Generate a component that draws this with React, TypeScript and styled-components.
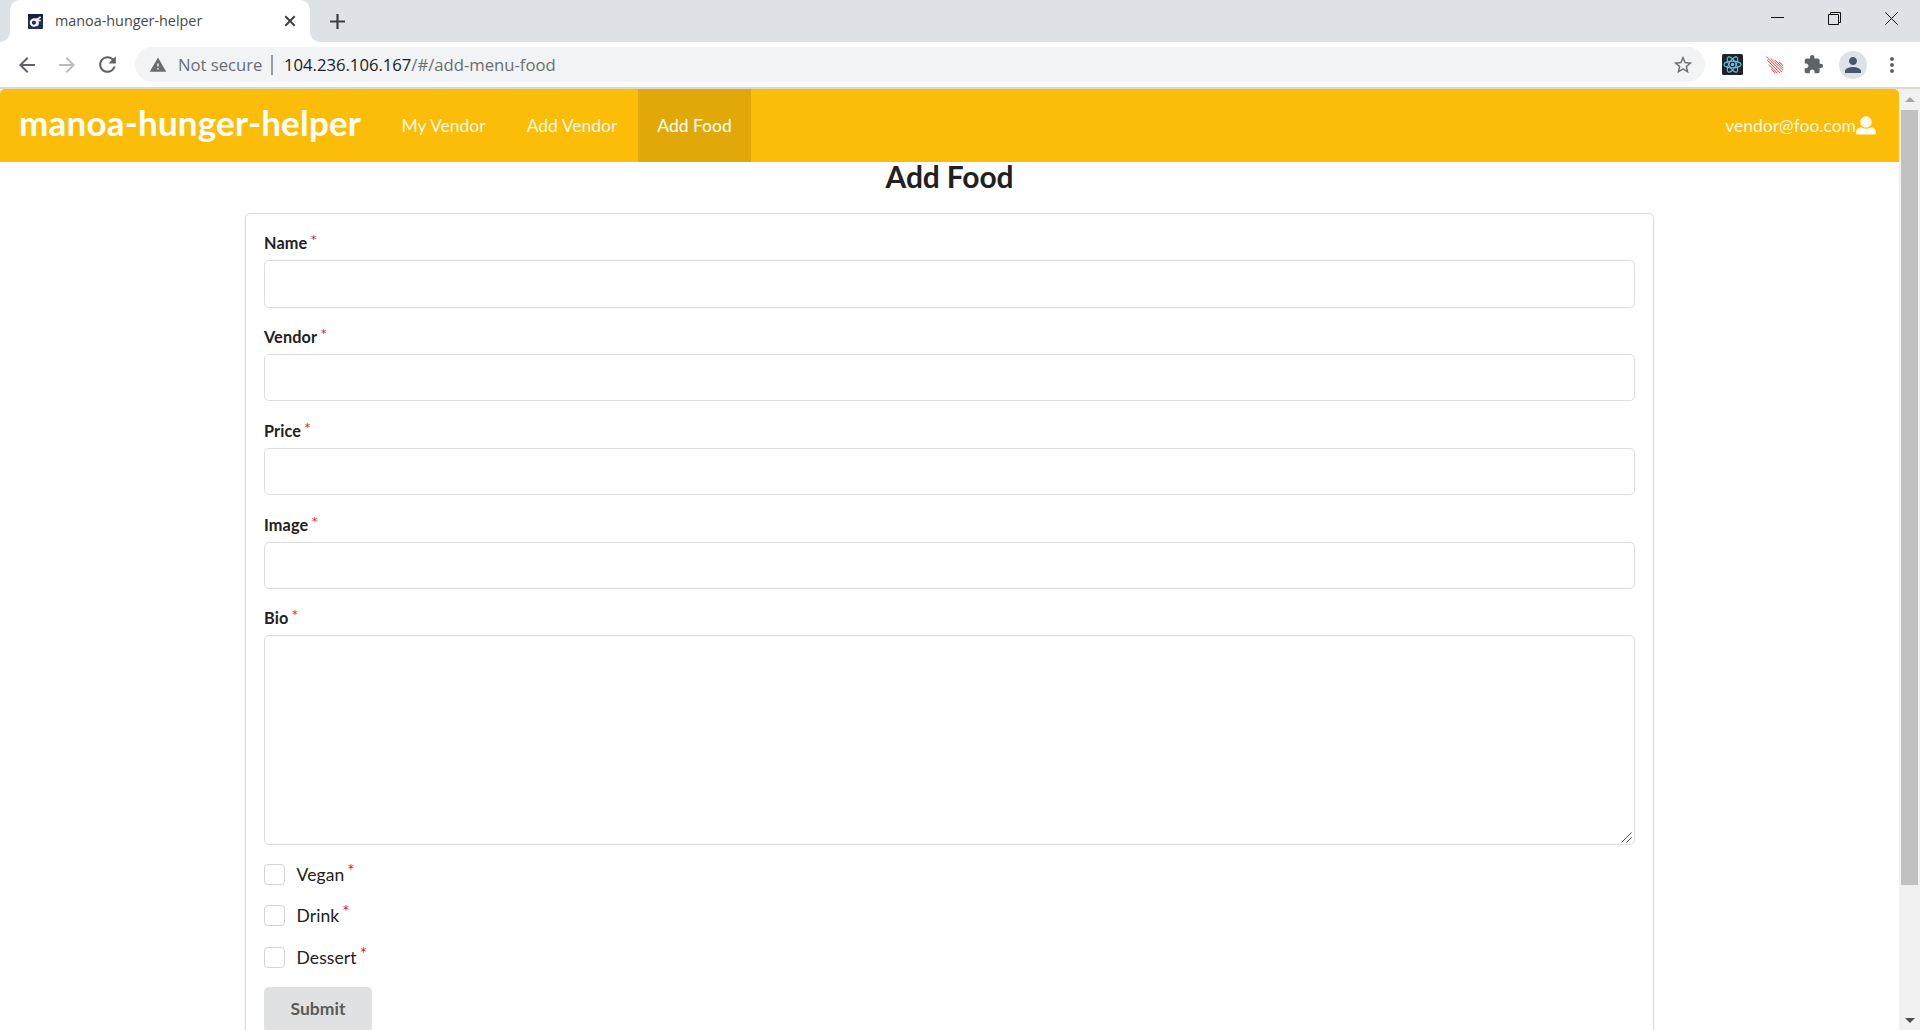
import React from 'react';
import styled, { createGlobalStyle } from 'styled-components';
import { MdStarBorder, MdExtension, MdPerson, MdRefresh, MdArrowBack, MdArrowForward, MdWarning, MdMoreVert } from 'react-icons/md';

const Global = createGlobalStyle`
  *, *::before, *::after { box-sizing: border-box; }
  body { margin: 0; background: #fff; overflow: hidden; }
`;

const Window = styled.div`
  display: flex;
  flex-direction: column;
  width: 1920px;
  height: 1030px;
  overflow: hidden;
  font-family: Lato, "Liberation Sans", sans-serif;
`;

const TabStrip = styled.div`
  display: flex;
  flex: 0 0 42px;
  height: 42px;
  background: #dee1e6;
`;

const TabCurve = styled.div<{ $side: 'left' | 'right' }>`
  width: 10px;
  height: 10px;
  align-self: flex-end;
  background: radial-gradient(circle at ${p => (p.$side === 'left' ? '0 0' : '100% 0')}, #dee1e6 9.5px, #fff 10px);
`;

const Tab = styled.div`
  display: flex;
  align-items: center;
  width: 300px;
  padding: 0 10px 0 18px;
  background: #fff;
  border-radius: 10px 10px 0 0;
`;

const TabTitle = styled.span`
  flex: 1;
  margin-left: 12px;
  font: 400 14.4px/20px "Open Sans", sans-serif;
  letter-spacing: -0.02px;
  color: #45494d;
`;

const NewTab = styled.div`
  display: flex;
  align-items: center;
  margin-left: 10px;
`;

const WindowButtons = styled.div`
  display: flex;
  align-items: center;
  gap: 44px;
  height: 37px;
  margin-left: auto;
  padding-right: 22px;
`;

const Toolbar = styled.div`
  display: flex;
  align-items: center;
  flex: 0 0 45px;
  height: 45px;
  padding: 0 16px 0 15px;
  background: #fff;
  color: #5f6368;
  svg { flex: none; }
`;

const NavIcon = styled.span<{ $dim?: boolean; $gap: number }>`
  display: flex;
  margin-right: ${p => p.$gap}px;
  color: ${p => (p.$dim ? '#babcbe' : '#5f6368')};
`;

const Omnibox = styled.div`
  display: flex;
  align-items: center;
  flex: 1;
  height: 35px;
  padding: 0 11px 0 14px;
  border-radius: 18px;
  background: #f1f3f4;
  font: 400 16.7px/24px "Open Sans", sans-serif;
  letter-spacing: -0.02px;
  color: #6a6e73;
`;

const Security = styled.span`
  width: 84px;
  margin-left: 11px;
  white-space: nowrap;
`;

const Divider = styled.span`
  width: 2px;
  height: 20px;
  margin: 0 11px 0 9px;
  background: #96999d;
`;

const Url = styled.span`
  flex: 1;
  white-space: nowrap;
  b { font-weight: 400; color: #202124; }
`;

const Extensions = styled.div`
  display: flex;
  align-items: center;
  margin-left: 17px;
`;

const ExtensionSlot = styled.span<{ $gap: number }>`
  display: flex;
  margin-right: ${p => p.$gap}px;
`;

const Avatar = styled.span`
  display: flex;
  align-items: center;
  justify-content: center;
  width: 28px;
  height: 28px;
  margin-right: 13.5px;
  border-radius: 50%;
  background: #dee1e6;
  color: #4a5670;
`;

const Edge = styled.div`
  flex: 0 0 2px;
  background: #dcd9c8;
`;

const Viewport = styled.div`
  display: flex;
  flex: 1;
  min-height: 0;
`;

const Page = styled.main`
  display: flex;
  flex-direction: column;
  align-items: center;
  width: 1899px;
  height: 941px;
  overflow: hidden;
`;

const Nav = styled.nav`
  display: flex;
  align-self: stretch;
  flex: 0 0 73px;
  height: 73px;
  background: #fbbd08;
  border-radius: 5px 5px 0 0;
  color: rgba(255, 255, 255, 0.92);
`;

const Brand = styled.h1`
  display: flex;
  align-items: center;
  width: 381px;
  margin: 0;
  padding: 0 0 8px 19px;
  font-size: 35px;
  letter-spacing: 0.2px;
  font-weight: 700;
  line-height: 40px;
  color: #fff;
`;

const NavItem = styled.a<{ $active?: boolean; $width: number }>`
  display: flex;
  align-items: center;
  justify-content: center;
  width: ${p => p.$width}px;
  font-size: 17.5px;
  background: ${p => (p.$active ? '#e0a909' : 'transparent')};
  color: ${p => (p.$active ? '#fff' : 'inherit')};
`;

const User = styled.a`
  display: flex;
  align-items: center;
  margin-left: auto;
  padding-right: 23px;
  font-size: 17.5px;
`;

const Heading = styled.h2`
  flex: none;
  height: 29px;
  margin: 0 0 22px;
  font-size: 30px;
  line-height: 28px;
  letter-spacing: -0.15px;
  font-weight: 700;
  color: #212121;
`;

const Card = styled.form`
  flex: none;
  display: flex;
  flex-direction: column;
  width: 1409px;
  height: 900px;
  padding: 18.4px 18px 0;
  border: 1px solid #d9dadb;
  border-radius: 5px;
  box-shadow: 0 1px 2px rgba(34, 36, 38, 0.12);
`;

const Field = styled.div<{ $last?: boolean }>`
  display: flex;
  flex-direction: column;
  flex: none;
  height: ${p => (p.$last ? 240 : 93.75)}px;
`;

const Label = styled.label`
  display: flex;
  height: 28px;
  flex: none;
  font-size: 16.25px;
  letter-spacing: 0.12px;
  line-height: 22px;
  font-weight: 700;
  color: #212121;
`;

const Star = styled.span`
  margin: -3px 0 0 3px;
  font-weight: 400;
  color: #db2828;
`;

const Input = styled.input`
  width: 1371px;
  height: 47.3px;
  border: 1px solid #dededf;
  border-radius: 5px;
  background: #fff;
  outline: none;
`;

const TextArea = styled.textarea`
  display: block;
  width: 1371px;
  height: 210px;
  border: 1px solid #dededf;
  border-radius: 5px;
  background: #fff;
  outline: none;
  resize: none;
`;

const AreaWrap = styled.div`
  position: relative;
  height: 210px;
`;

const Grip = styled.svg`
  position: absolute;
  right: 3px;
  bottom: 2px;
`;

const Checks = styled.div`
  display: flex;
  flex-direction: column;
  gap: 20.4px;
  margin-top: 16.6px;
`;

const CheckRow = styled.label`
  display: flex;
  height: 21px;
  font-size: 17.5px;
  letter-spacing: 0.1px;
  line-height: 22px;
  color: #212121;
`;

const Box = styled.span`
  width: 21px;
  height: 21px;
  margin-right: 11.5px;
  border: 1px solid #d4d4d5;
  border-radius: 4px;
`;

const CheckStar = styled(Star)`
  margin-top: -4px;
`;

const Submit = styled.button`
  width: 108px;
  height: 45px;
  margin-top: 19px;
  padding: 0;
  border: 0;
  border-radius: 5px;
  background: #e0e1e2;
  color: #5a5a5a;
  font: 700 17.5px/20px Lato, sans-serif;
`;

const Scrollbar = styled.div`
  display: flex;
  flex-direction: column;
  align-items: center;
  width: 21px;
  background: #f1f1f1;
`;

const Thumb = styled.div`
  width: 17px;
  height: 775px;
  margin-bottom: auto;
  background: #c1c1c1;
`;

const ArrowBox = styled.div<{ $height: number }>`
  display: flex;
  align-items: center;
  height: ${p => p.$height}px;
`;

const Favicon = () => (
  <svg width="15" height="15" viewBox="0 0 16 16">
    <rect width="16" height="16" rx="1" fill="#1f2f5c" />
    <path d="M0 0h16v5H0z" fill="#18203c" />
    <circle cx="6.3" cy="9.2" r="3.3" fill="none" stroke="#fff" strokeWidth="2.2" />
    <path d="M5.500 5.500Q10 6.500 13.500 3M9.500 6.500L13.500 7M10 7.500Q12 11 9 12.500" fill="none" stroke="#eef" strokeWidth="1.8" />
  </svg>
);

const ReactLogo = () => (
  <svg width="21" height="21" viewBox="0 0 21 21">
    <rect width="21" height="21" rx="1.5" fill="#20232a" />
    <g fill="none" stroke="#61bfe0" strokeWidth="1.15">
      {[0, 60, 120].map(a => (
        <ellipse key={a} cx="10.5" cy="10.5" rx="8.6" ry="3.4" transform={`rotate(${a} 10.5 10.5)`} />
      ))}
    </g>
    <circle cx="10.5" cy="10.5" r="1.8" fill="#61bfe0" />
  </svg>
);

const Meteor = () => (
  <svg width="18" height="18" viewBox="0 0 18 18" fill="none" stroke="#de4040" strokeWidth="1" strokeLinecap="round">
    <path d="M.7 1L15.800 16M5 2.700L16.800 14M9 4.200L17 11.800M13 5.800L17 9.500M1.600 4.500L13.500 16.700M3.200 8.800L11.200 17M5.500 13.500L8.500 16.500" />
  </svg>
);

const fields = ['Name', 'Vendor', 'Price', 'Image'];
const options = ['Vegan', 'Drink', 'Dessert'];

export default function App() {
  return (
    <Window>
      <Global />
      <TabStrip>
        <TabCurve $side="left" />
        <Tab>
          <Favicon />
          <TabTitle>manoa-hunger-helper</TabTitle>
          <svg width="20" height="20" viewBox="0 0 20 20" stroke="#3c4043" strokeWidth="2"><path d="M5.300 5.300l9.400 9.400M14.700 5.300l-9.400 9.400" /></svg>
        </Tab>
        <TabCurve $side="right" />
        <NewTab>
          <svg width="15" height="15" viewBox="0 0 15 15" stroke="#3c4043" strokeWidth="2.2"><path d="M7.5 0v15M0 7.5h15" /></svg>
        </NewTab>
        <WindowButtons>
          <svg width="13" height="13" viewBox="0 0 13 13"><path d="M0 5.5h13" stroke="#111" /></svg>
          <svg width="13" height="13" viewBox="0 0 13 13" fill="none" stroke="#111"><path d="M.5 2.5h10v10H.5zM2.5 2.5v-2h10v10h-2" /></svg>
          <svg width="13" height="13" viewBox="0 0 13 13" stroke="#111"><path d="M.3.3l12.4 12.4M12.7.3L.3 12.7" /></svg>
        </WindowButtons>
      </TabStrip>
      <Toolbar>
        <NavIcon $gap={16}><MdArrowBack size={24} /></NavIcon>
        <NavIcon $gap={16} $dim><MdArrowForward size={24} /></NavIcon>
        <NavIcon $gap={15}><MdRefresh size={25} /></NavIcon>
        <Omnibox>
          <MdWarning size={18} />
          <Security>Not secure</Security>
          <Divider />
          <Url><b>104.236.106.167</b>/#/add-menu-food</Url>
          <MdStarBorder size={22} />
        </Omnibox>
        <Extensions>
          <ExtensionSlot $gap={22.5}><ReactLogo /></ExtensionSlot>
          <ExtensionSlot $gap={19}><Meteor /></ExtensionSlot>
          <ExtensionSlot $gap={15}><MdExtension size={21} /></ExtensionSlot>
          <Avatar><MdPerson size={24} /></Avatar>
          <MdMoreVert size={24} />
        </Extensions>
      </Toolbar>
      <Edge />
      <Viewport>
        <Page>
          <Nav>
            <Brand>manoa-hunger-helper</Brand>
            <NavItem $width={125}>My Vendor</NavItem>
            <NavItem $width={132}>Add Vendor</NavItem>
            <NavItem $width={113} $active>Add Food</NavItem>
            <User>
              vendor@foo.com
              <svg width="20" height="19" viewBox="0 0 20 19" fill="currentColor">
                <circle cx="10" cy="6" r="5.8" />
                <path d="M1.500 18.500c-1.100 0-1.500-.6-1.500-1.500C0 13.600 2 11.800 5 11.300c3 1.900 7 1.900 10 0 3 .5 5 2.300 5 5.700 0 .9-.4 1.500-1.500 1.500z" />
              </svg>
            </User>
          </Nav>
          <Heading>Add Food</Heading>
          <Card>
            {fields.map(name => (
              <Field key={name}>
                <Label>{name}<Star>*</Star></Label>
                <Input />
              </Field>
            ))}
            <Field $last>
              <Label>Bio<Star>*</Star></Label>
              <AreaWrap>
                <TextArea />
                <Grip width="11" height="11" viewBox="0 0 11 11" stroke="#555"><path d="M.5 10.500l10-10M5.500 10.500l5-5" /></Grip>
              </AreaWrap>
            </Field>
            <Checks>
              {options.map(name => (
                <CheckRow key={name}><Box />{name}<CheckStar>*</CheckStar></CheckRow>
              ))}
            </Checks>
            <Submit type="button">Submit</Submit>
          </Card>
        </Page>
        <Scrollbar>
          <ArrowBox $height={21}><svg width="10" height="5" viewBox="0 0 10 5"><path d="M0 5l5-5 5 5z" fill="#a3a3a3" /></svg></ArrowBox>
          <Thumb />
          <ArrowBox $height={19}><svg width="10" height="5" viewBox="0 0 10 5"><path d="M0 0l5 5 5-5z" fill="#505050" /></svg></ArrowBox>
        </Scrollbar>
      </Viewport>
    </Window>
  );
}
